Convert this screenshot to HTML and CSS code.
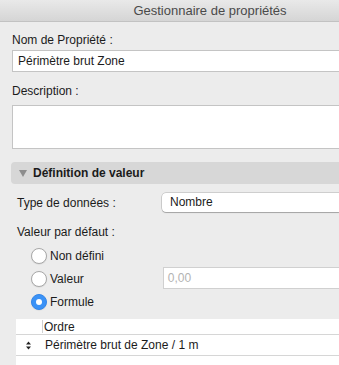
FILE: index.html
```html
<!DOCTYPE html>
<html lang="fr">
<head>
    <meta charset="UTF-8">
    <meta name="viewport" content="width=device-width, initial-scale=1.0">
    <title>Gestionnaire de propriétés</title>
    <link rel="stylesheet" href="styles.css">
</head>
<body>
    <div class="window">
        <div class="titlebar">Gestionnaire de propriétés</div>
        <div class="content">
            <label class="field-label">Nom de Propriété :</label>
            <div class="text-input">Périmètre brut Zone</div>

            <label class="field-label desc-label">Description :</label>
            <div class="text-area"></div>

            <div class="section-header">
                <span class="disclosure"></span>
                <span>Définition de valeur</span>
            </div>

            <div class="section-body">
                <div class="type-row">
                    <span class="type-label">Type de données :</span>
                    <div class="popup">Nombre</div>
                </div>

                <div class="default-label">Valeur par défaut :</div>

                <div class="radio-list">
                    <div class="radio-row">
                        <span class="radio"></span>
                        <span class="radio-text">Non défini</span>
                    </div>
                    <div class="radio-row">
                        <span class="radio"></span>
                        <span class="radio-text">Valeur</span>
                        <div class="value-input">0,00</div>
                    </div>
                    <div class="radio-row">
                        <span class="radio checked"></span>
                        <span class="radio-text">Formule</span>
                    </div>
                </div>
            </div>

            <div class="table">
                <div class="table-head">
                    <span class="col-sep"></span>
                    <span>Ordre</span>
                </div>
                <div class="table-row">
                    <span class="sort-icon">
                        <svg width="5" height="9" viewBox="0 0 5 9"><path d="M0 3.5 L2.5 0.5 L5 3.5 Z M0 5.5 L2.5 8.5 L5 5.5 Z" fill="#222"/></svg>
                    </span>
                    <span>Périmètre brut de Zone / 1 m</span>
                </div>
            </div>
        </div>
    </div>
</body>
</html>
```

FILE: styles.css
```css
html, body {
    margin: 0;
    padding: 0;
    overflow: hidden;
}

body {
    font-family: "Liberation Sans", Arial, sans-serif;
    font-size: 12px;
    color: #1b1b1b;
    background-color: #ececec;
}

.window {
    height: 365px;
    background-color: #ececec;
}

/* Barre de titre (centrée sur la fenêtre complète, plus large que la capture) */
.titlebar {
    height: 21px;
    line-height: 21px;
    padding-left: 81px;
    text-align: center;
    font-size: 13px;
    color: #4a4a4a;
    background: linear-gradient(#e9e9e9, #d5d5d5);
    border-bottom: 1px solid #c2c2c2;
}

.content {
    padding-left: 12px;
}

.field-label {
    display: block;
    line-height: 15px;
    padding-top: 11px;
    margin-bottom: 2px;
}

.desc-label {
    padding-top: 12px;
    margin-bottom: 6px;
}

.text-input {
    height: 20px;
    line-height: 20px;
    padding-left: 5px;
    background: white;
    border: 1px solid #c4c4c4;
    border-right: none;
}

.text-area {
    height: 42px;
    background: white;
    border: 1px solid #c4c4c4;
    border-right: none;
}

/* Section repliable */
.section-header {
    display: flex;
    align-items: center;
    height: 22px;
    margin: 13px 0 0 -1px;
    padding-left: 8px;
    background-color: #d7d7d7;
    border-radius: 4px 0 0 4px;
    font-weight: bold;
}

.disclosure {
    width: 0;
    height: 0;
    border-left: 4px solid transparent;
    border-right: 4px solid transparent;
    border-top: 7px solid #8d8d8d;
    margin-right: 6px;
}

.section-body {
    padding-left: 5px;
}

.type-row {
    display: flex;
    align-items: center;
    margin-top: 9px;
    height: 19px;
}

.type-label {
    width: 145px;
}

.popup {
    flex: 1;
    height: 19px;
    line-height: 19px;
    padding-left: 8px;
    background: white;
    border-radius: 4px 0 0 4px;
    box-shadow: 0 0 0 0.5px rgba(0, 0, 0, 0.25), 0 1px 1px rgba(0, 0, 0, 0.2);
}

.default-label {
    line-height: 15px;
    margin-top: 13px;
}

.radio-list {
    display: flex;
    flex-direction: column;
    gap: 7px;
    margin-top: 8px;
    padding-left: 14px;
}

.radio-row {
    display: flex;
    align-items: center;
    height: 16px;
}

.radio {
    box-sizing: border-box;
    width: 16px;
    height: 16px;
    border-radius: 50%;
    background: white;
    border: 1px solid #a8a8a8;
    box-shadow: 0 0.5px 1px rgba(0, 0, 0, 0.1);
    margin-right: 3px;
    display: flex;
    align-items: center;
    justify-content: center;
}

.radio.checked {
    background: #3b92f6;
    border-color: #3386ea;
}

.radio.checked::after {
    content: "";
    width: 6px;
    height: 6px;
    border-radius: 50%;
    background: white;
}

.value-input {
    margin-left: 79px;
    flex: 1;
    height: 20px;
    line-height: 20px;
    padding-left: 4px;
    color: #b3b3b3;
    background: white;
    border: 1px solid #d0d0d0;
    border-right: none;
    margin-top: -3px;
}

/* Tableau des formules */
.table {
    margin: 9px 0 0 4px;
    background: white;
    height: 46px;
}

.table-head {
    display: flex;
    align-items: center;
    height: 15px;
    border-bottom: 1px solid #d6d6d6;
}

.col-sep {
    width: 1px;
    height: 13px;
    background: #d0d0d0;
    margin: 0 1px 0 26px;
}

.table-row {
    display: flex;
    align-items: center;
    height: 20px;
    border-bottom: 1px solid #d6d6d6;
}

.sort-icon {
    display: flex;
    width: 29px;
    padding-left: 10px;
    box-sizing: border-box;
}
```
